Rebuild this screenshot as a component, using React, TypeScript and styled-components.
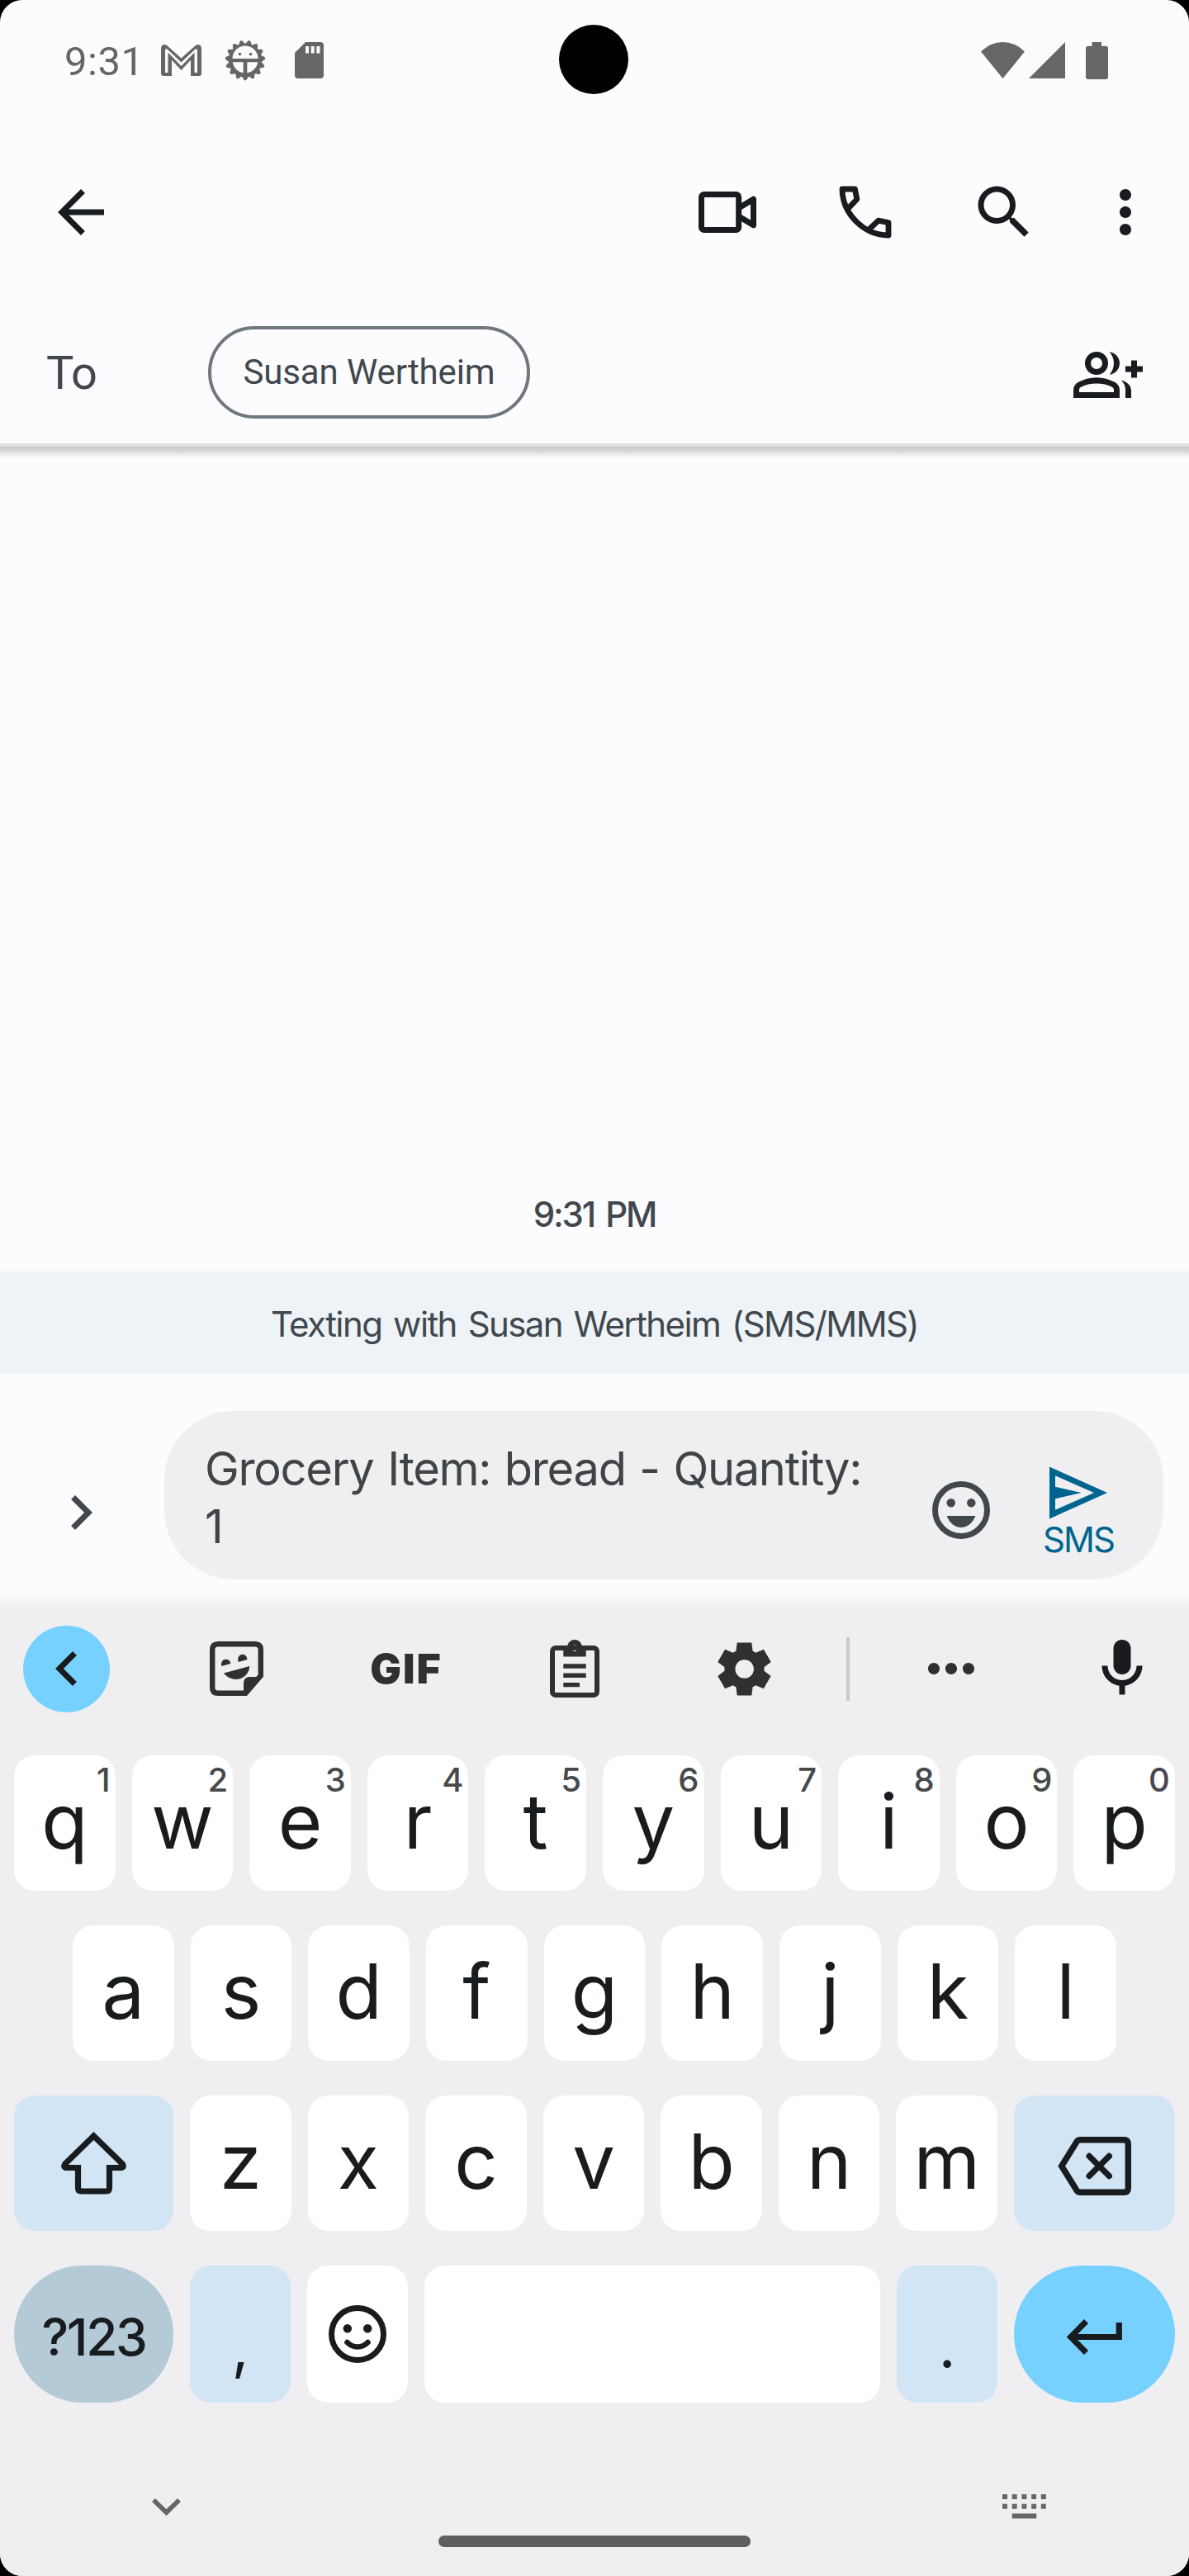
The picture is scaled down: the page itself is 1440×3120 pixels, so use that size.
import React from "react";
import styled, { createGlobalStyle } from "styled-components";

const ink = "#191c1e";
const slate = "#41484d";
const statusGray = "#666666";
const board = "#efeff2";
const accent = "#76d1ff";
const tint = "#d2e5f4";

const GlobalStyle = createGlobalStyle`
  * { box-sizing: border-box; }
  body { margin: 0; background: #000; }
`;

const Screen = styled.main`
  position: relative;
  display: flex;
  flex-direction: column;
  width: 1440px;
  height: 3120px;
  overflow: hidden;
  border-radius: 27px;
  background: #fcfcff;
  font-family: Roboto, "Noto Sans", sans-serif;
  color: ${slate};
`;

const Icon = styled.svg<{ $w: number; $h?: number; $color?: string }>`
  display: block;
  flex: none;
  width: ${(p) => p.$w}px;
  height: ${(p) => p.$h ?? p.$w}px;
  fill: ${(p) => p.$color ?? ink};
  overflow: visible;
`;

/* ---------- status bar ---------- */

const StatusBar = styled.header`
  display: flex;
  align-items: center;
  flex: none;
  height: 144px;
  padding: 2px 98px 0 78px;
`;

const Clock = styled.span`
  width: 117px;
  padding-top: 4px;
  font-size: 49px;
  line-height: 60px;
  letter-spacing: 0.5px;
  color: ${statusGray};
`;

const Notifications = styled.div`
  display: flex;
  align-items: center;
  gap: 28px;
`;

const CardSlot = styled.div`
  padding-left: 7px;
`;

const Indicators = styled.div`
  display: flex;
  align-items: flex-start;
  margin-left: auto;
  gap: 5px;
`;

const BatterySlot = styled.div`
  margin-left: 20px;
`;

const CameraHole = styled.div`
  position: absolute;
  left: 677px;
  top: 30px;
  width: 84px;
  height: 84px;
  border-radius: 50%;
  background: #000;
`;

/* ---------- app bar ---------- */

const AppBar = styled.nav`
  display: flex;
  align-items: center;
  flex: none;
  height: 226px;
  padding: 0 35px 0 56px;
`;

const Actions = styled.div`
  display: flex;
  align-items: center;
  gap: 83.5px;
  margin-left: auto;
`;

const MenuSlot = styled.div`
  margin-left: -20px;
`;

const Recipients = styled.section`
  display: flex;
  align-items: center;
  flex: none;
  height: 167px;
  padding: 0 56px;
`;

const ToLabel = styled.span`
  width: 196px;
  margin-bottom: 4px;
  font-size: 56px;
  line-height: 66px;
  letter-spacing: -0.7px;
`;

const Chip = styled.button`
  height: 112px;
  width: 390px;
  margin-bottom: 5px;
  padding: 0;
  border: 4px solid #6f787e;
  border-radius: 56px;
  background: none;
  font: 42px/50px Roboto, sans-serif;
  letter-spacing: -0.1px;
  color: ${slate};
`;

const PushRight = styled.div`
  margin-left: auto;
`;

const Rule = styled.div`
  flex: none;
  height: 18px;
  background: linear-gradient(#dfe0e1 0, #e4e5e6 4px, #c8c8ca 4px, #d6d6d8 9px, #efeff1 14px, #fcfcff 18px);
`;

/* ---------- conversation ---------- */

const Conversation = styled.section`
  display: flex;
  flex: 1;
  flex-direction: column;
  justify-content: flex-end;
  align-items: center;
  padding-bottom: 44px;
`;

const Timestamp = styled.time`
  font: 500 42px/50px Inter, sans-serif;
  letter-spacing: -2.1px;
  word-spacing: 4px;
`;

const Banner = styled.p`
  flex: none;
  margin: 0;
  height: 124px;
  background: #eef3f8;
  font: 42px/128px Inter, sans-serif;
  letter-spacing: -1.6px;
  word-spacing: 3.6px;
  text-align: center;
  white-space: nowrap;
`;

const Compose = styled.section`
  display: flex;
  flex: none;
  height: 280px;
  padding: 45px 31px 31px 56px;
  background: linear-gradient(#fcfcff 266px, #f1f1f4 280px);
`;

const ExpandButton = styled.div`
  width: 143px;
  padding-top: 81px;
`;

const Field = styled.div`
  display: flex;
  flex: 1;
  height: 204px;
  padding-left: 49px;
  border-radius: 84px;
  background: ${board};
`;

const Draft = styled.p`
  flex: none;
  width: 881px;
  margin: 0;
  padding-top: 35px;
  font: 56px/70px Inter, sans-serif;
  letter-spacing: -1.3px;
  word-spacing: 2.2px;
  color: #3f4447;
`;

const EmojiSlot = styled.div`
  padding-top: 78px;
  margin-left: -7px;
`;

const SendButton = styled.div`
  display: flex;
  flex-direction: column;
  align-items: center;
  width: 110px;
  margin-left: 45px;
  padding-top: 57px;
  font: 42px/50px Inter, sans-serif;
  letter-spacing: -1.9px;
  color: #00658e;
`;

const SendLabel = styled.span`
  margin-top: -10px;
`;

/* ---------- keyboard ---------- */

const Keyboard = styled.section`
  display: flex;
  flex-direction: column;
  flex: none;
  height: 1176px;
  background: ${board};
`;

const ToolStrip = styled.div`
  display: flex;
  align-items: center;
  height: 154px;
  padding: 0 39px 0 28px;
`;

const ToolCell = styled.div<{ $w: number }>`
  display: flex;
  justify-content: center;
  width: ${(p) => p.$w}px;
`;

const Collapse = styled.div`
  display: grid;
  place-items: center;
  width: 105px;
  height: 105px;
  border-radius: 50%;
  background: ${accent};
`;

const GifLabel = styled.span`
  padding-left: 2px;
  font: 900 50px/60px Inter, sans-serif;
  letter-spacing: 2px;
  color: #303030;
`;

const Separator = styled.div`
  width: 4px;
  height: 77px;
  background: #c9cacc;
`;

const Rows = styled.div`
  display: flex;
  flex-direction: column;
  gap: 42px;
  padding: 28px 17px 0;
`;

const Row = styled.div<{ $inset?: number; $h?: number }>`
  display: flex;
  gap: 20px;
  height: ${(p) => p.$h ?? 164}px;
  padding: 0 ${(p) => p.$inset ?? 0}px;
`;

const Key = styled.button<{ $w?: number; $bg?: string; $pill?: boolean; $drop?: number }>`
  position: relative;
  display: grid;
  justify-items: center;
  align-items: center;
  flex: ${(p) => (p.$w ? "none" : "1")};
  width: ${(p) => (p.$w ? `${p.$w}px` : "auto")};
  min-width: 0;
  height: 100%;
  padding: ${(p) => p.$drop ?? 0}px 0 0;
  border: 0;
  border-radius: ${(p) => (p.$pill ? 83 : 25)}px;
  background: ${(p) => p.$bg ?? "#fff"};
  color: ${ink};
`;

const Letter = styled.span`
  padding-bottom: 5px;
  font: 92px/158px Inter, sans-serif;
`;

const Hint = styled.span`
  position: absolute;
  top: 5px;
  right: 6px;
  font: 500 40px/50px Inter, sans-serif;
  color: #47494b;
`;

const SymbolsLabel = styled.span`
  padding-top: 8px;
  font: 500 62px/80px Inter, sans-serif;
  letter-spacing: -2.4px;
`;

const Punctuation = styled.span`
  padding-top: 29px;
  font: 72px/100px Inter, sans-serif;
`;

const NavBar = styled.footer`
  display: flex;
  justify-content: space-between;
  align-items: flex-start;
  margin-top: auto;
  height: 99px;
  padding: 0 173.5px 0 184px;
`;

const NavSlot = styled.div<{ $top: number }>`
  padding-top: ${(p) => p.$top}px;
`;

const Handle = styled.div`
  width: 378px;
  height: 14px;
  margin: 50px 0 0 8px;
  border-radius: 7px;
  background: #5f5f5f;
`;

/* ---------- glyph drawings ---------- */

const P24 = ({ d, size = 84, color }: { d: string; size?: number; color?: string }) => (
  <Icon viewBox="0 0 24 24" $w={size} $color={color}>
    <path d={d} fillRule="evenodd" />
  </Icon>
);

const MailIcon = () => (
  <Icon viewBox="0 0 49 38" $w={49} $h={38} $color={statusGray}>
    <path
      fillRule="evenodd"
      d="M0 5Q0 0 4.500 0Q6.200 0 8 1.800L24.500 16.500L41 1.800Q42.800 0 44.500 0Q49 0 49 5V35Q49 38 46 38H36V18.700L24.500 31L13 18.700V38H3Q0 38 0 35ZM5 6.500Q5.500 4.500 7.500 5.500L24.500 21.500L41.500 5.500Q43.500 4.500 44 6.500V34H40.500V9.500L24.500 26L8.500 9.500V34H5Z"
    />
  </Icon>
);

const BugIcon = () => (
  <Icon viewBox="-25 -25 50 50" $w={50} $color={statusGray}>
    {Array.from({ length: 15 }, (_, i) => (
      <path
        key={i}
        d="M-4.300 19L-1.500 23.700Q0 25.300 1.500 23.700L4.300 19Z"
        transform={`rotate(${i * 24})`}
      />
    ))}
    <circle r={20.2} />
    <path
      fill="#fcfcff"
      d="M-15.500 -2A15.500 15.500 0 0 1 15.500 -2ZM-15.300 2.300H-2.300V15.300A15.500 15.500 0 0 1 -15.300 2.300ZM15.300 2.300H2.300V15.300A15.500 15.500 0 0 0 15.300 2.300Z"
    />
    <circle cx={-6.5} cy={-7.4} r={1.8} />
    <circle cx={6.5} cy={-7.4} r={1.8} />
  </Icon>
);

const CardIcon = () => (
  <Icon viewBox="0 0 35 44" $w={35} $h={44} $color={statusGray}>
    <path
      fillRule="evenodd"
      d="M13 0H31Q35 0 35 4V40Q35 44 31 44H4Q0 44 0 40V13ZM13 5V13.500H17V5ZM19.700 5V13.500H23.700V5ZM26.300 5V13.500H30.500V5Z"
    />
  </Icon>
);

const WifiIcon = () => (
  <Icon viewBox="0 0 53 44" $w={53} $h={44} $color={statusGray}>
    <path d="M0 11.500Q11.500 0 26.500 0T53 11.500L26.500 44Z" />
  </Icon>
);

const SignalIcon = () => (
  <Icon viewBox="0 0 44 44" $w={44} $color={statusGray}>
    <path d="M44 0V44H0Z" />
  </Icon>
);

const BatteryIcon = () => (
  <Icon viewBox="0 0 27 45" $w={27} $h={45} $color={statusGray}>
    <path d="M7.500 0H19V4.700H24Q27 4.700 27 7.700V42Q27 45 24 45H3Q0 45 0 42V7.700Q0 4.700 3 4.700H7.500Z" />
  </Icon>
);

const VideoIcon = () => (
  <Icon viewBox="0 0 24 24" $w={84}>
    <g fill="none" stroke={ink} strokeWidth={2} strokeLinejoin="round">
      <rect x={3} y={5.85} width={12.9} height={12.3} rx={0.9} />
      <path d="M16 10.500L21 7.500V16.500L16 13.500" />
    </g>
  </Icon>
);

const PhoneIcon = () => (
  <Icon viewBox="0 0 24 24" $w={84}>
    <path
      fill="none"
      stroke={ink}
      strokeWidth={1.95}
      strokeLinejoin="round"
      d="M6.100 10.700L9.100 7.500L8.400 4H4C4 12.500 11.500 20 20 20V15.600L16.500 14.900L13.300 17.900"
    />
  </Icon>
);

const PeopleAddIcon = () => (
  <P24 d="M8 4a4 4 0 1 0 0 8a4 4 0 0 0 0-8zm0 2a2 2 0 1 1 0 4a2 2 0 0 1 0-4zM0 20V17.200c0-1.100.6-2 1.600-2.600C3.500 13.500 5.600 12.900 8 12.900s4.500.6 6.400 1.700c1 .6 1.600 1.500 1.600 2.600V20H0zm2-2h12v-.8c0-.4-.2-.7-.5-.9C11.900 15.400 10 15 8 15s-3.900.4-5.500 1.300c-.3.200-.5.500-.5.900V18zM12.500 11.950C13.400 10.900 14 9.500 14 8s-.6-2.900-1.500-3.950C14.500 4.300 16 6 16 8s-1.500 3.700-3.500 3.950zM16.530 13.830C18.600 14.400 20 15.600 20 17.500V20h-2v-3c0-1.200-.6-2.300-1.470-3.170zM20 7h2v2h2v2h-2v2h-2v-2h-2v-2h2z" />
);

const GrinIcon = () => (
  <Icon viewBox="0 0 24 24" $w={84} $color={slate}>
    <circle cx={12} cy={12} r={9} fill="none" stroke={slate} strokeWidth={2} />
    <circle cx={8.5} cy={9.5} r={1.5} />
    <circle cx={15.5} cy={9.5} r={1.5} />
    <path d="M7.050 14H16.950C16.100 16.400 14.200 18 12 18S7.900 16.400 7.050 14Z" />
  </Icon>
);

const StickerIcon = () => (
  <Icon viewBox="0 0 65 66" $w={65} $h={66} $color="#303030">
    <path
      fill="none"
      stroke="#303030"
      strokeWidth={6.4}
      d="M10 3.200H55Q61.800 3.200 61.800 10V41.500L43.500 62.800H10Q3.200 62.800 3.200 56V10Q3.200 3.200 10 3.200Z"
    />
    <path d="M41 61V51Q41 43 49 43H62L44 64Z" />
    <path d="M14.300 30C13 25 16 21.700 19.500 21.700S25 24 25.300 27Z" />
    <path d="M34.700 25C33 19.500 36 15.700 39.500 15.700S45 18 45.500 22Z" />
    <path d="M17 38.500L48.300 30C48 38.500 41 45.500 33 46C26 46 20 43 17 38.500Z" />
  </Icon>
);

const ClipboardIcon = () => (
  <Icon viewBox="0 0 60 70" $w={60} $h={70} $color="#303030">
    <rect x={3} y={10} width={54} height={57} rx={4} fill="none" stroke="#303030" strokeWidth={6} />
    <path
      fillRule="evenodd"
      d="M16.300 20.500V8H21C22 3 25.500 0 30 0S38 3 39 8H43.700V20.500ZM30 6.500a3.700 3.700 0 1 0 0 7.400a3.700 3.700 0 0 0 0-7.400z"
    />
    <path d="M16.300 29.300H43.700V34.800H16.300ZM16.300 40.500H43.700V46H16.300ZM16.300 52H36V57.300H16.300Z" />
  </Icon>
);

const ShiftIcon = () => (
  <Icon viewBox="0 0 79 76" $w={79} $h={76}>
    <path
      fill="none"
      stroke={ink}
      strokeWidth={7.2}
      d="M39.500 5L74.300 39Q77 43.500 72 43.500H58.500V68Q58.500 72 54.500 72H24.500Q20.500 72 20.500 68V43.500H7Q2 43.500 4.700 39Z"
    />
  </Icon>
);

const BackspaceIcon = () => (
  <Icon viewBox="0 0 89 71" $w={89} $h={71}>
    <g fill="none" stroke={ink} strokeWidth={7.4}>
      <path d="M27 3.700H80Q85.300 3.700 85.300 9V62Q85.300 67.300 80 67.300H27Q24.500 67.300 23 65L4.700 35.500L23 6Q24.500 3.700 27 3.700Z" />
      <path strokeLinecap="round" d="M38.200 23.500L62.300 47.500M62.300 23.500L38.200 47.500" />
    </g>
  </Icon>
);

const SmileIcon = () => (
  <Icon viewBox="-35 -35 70 70" $w={70}>
    <circle r={31.5} fill="none" stroke={ink} strokeWidth={7} />
    <circle cx={-12.2} cy={-6.8} r={5.2} />
    <circle cx={12.2} cy={-6.8} r={5.2} />
    <path fill="none" stroke={ink} strokeWidth={6.6} strokeLinecap="round" d="M-12.500 10Q-7 15.500 0 15.500T12.500 10" />
  </Icon>
);

const EnterIcon = () => (
  <Icon viewBox="0 0 67 43" $w={67} $h={43}>
    <path fill="none" stroke={ink} strokeWidth={7.2} d="M63.300 4V21.500H6M23.500 2.500L4.800 21.500L23.500 40.500" />
  </Icon>
);

const HideIcon = () => (
  <Icon viewBox="0 0 35 21" $w={35} $h={21}>
    <path fill="none" stroke="#666" strokeWidth={5.6} d="M2 2L17.500 17L33 2" />
  </Icon>
);

const KeyboardIcon = () => (
  <Icon viewBox="0 0 53 30" $w={53} $h={30} $color="#666">
    {[0, 1, 2, 3, 4].map((c) =>
      [0, 11.7].map((y) => <rect key={`${c}-${y}`} x={c * 11.7} y={y} width={6} height={6} />)
    )}
    <rect x={11.7} y={23.4} width={29.5} height={6} />
  </Icon>
);

const LetterKey = ({ letter, hint }: { letter: string; hint?: string }) => (
  <Key>
    <Letter>{letter}</Letter>
    {hint && <Hint>{hint}</Hint>}
  </Key>
);

const topRow = [..."qwertyuiop"];
const homeRow = [..."asdfghjkl"];
const lowRow = [..."zxcvbnm"];

export default function App() {
  return (
    <>
      <GlobalStyle />
      <Screen>
        <StatusBar>
          <Clock>9:31</Clock>
          <Notifications>
            <MailIcon />
            <BugIcon />
            <CardSlot>
              <CardIcon />
            </CardSlot>
          </Notifications>
          <Indicators>
            <WifiIcon />
            <SignalIcon />
            <BatterySlot>
              <BatteryIcon />
            </BatterySlot>
          </Indicators>
        </StatusBar>
        <CameraHole />

        <AppBar>
          <P24 d="M20 11H7.830l5.590-5.590L12 4l-8 8 8 8 1.410-1.410L7.830 13H20v-2z" />
          <Actions>
            <VideoIcon />
            <PhoneIcon />
            <P24 d="M15.500 14h-.79l-.28-.27A6.471 6.471 0 0 0 16 9.500 6.500 6.500 0 1 0 9.500 16c1.610 0 3.090-.59 4.230-1.570l.27.28v.79l5 4.990L20.490 19l-4.990-5zm-6 0C7.010 14 5 11.990 5 9.500S7.010 5 9.500 5 14 7.010 14 9.500 11.990 14 9.500 14z" />
            <MenuSlot>
              <P24 d="M12 8c1.100 0 2-.9 2-2s-.9-2-2-2-2 .9-2 2 .9 2 2 2zm0 2c-1.100 0-2 .9-2 2s.9 2 2 2 2-.9 2-2-.9-2-2-2zm0 6c-1.100 0-2 .9-2 2s.9 2 2 2 2-.9 2-2-.9-2-2-2z" />
            </MenuSlot>
          </Actions>
        </AppBar>

        <Recipients>
          <ToLabel>To</ToLabel>
          <Chip>Susan Wertheim</Chip>
          <PushRight>
            <PeopleAddIcon />
          </PushRight>
        </Recipients>
        <Rule />

        <Conversation>
          <Timestamp>9:31 PM</Timestamp>
        </Conversation>
        <Banner>Texting with Susan Wertheim (SMS/MMS)</Banner>

        <Compose>
          <ExpandButton>
            <P24 color={slate} d="M8.590 16.590L13.170 12 8.590 7.410 10 6l6 6-6 6z" />
          </ExpandButton>
          <Field>
            <Draft>
              Grocery Item: bread - Quantity:
              <br />1
            </Draft>
            <EmojiSlot>
              <GrinIcon />
            </EmojiSlot>
            <SendButton>
              <P24 color="#00658e" d="M2 3L22 12L2 21ZM4 6.100V9.900L13 12L4 14.100V17.900L17.400 12Z" />
              <SendLabel>SMS</SendLabel>
            </SendButton>
          </Field>
        </Compose>

        <Keyboard>
          <ToolStrip>
            <Collapse>
              <P24 d="M15.410 7.410L14 6l-6 6 6 6 1.410-1.410L10.830 12z" />
            </Collapse>
            <ToolCell $w={307}>
              <StickerIcon />
            </ToolCell>
            <ToolCell $w={102}>
              <GifLabel>GIF</GifLabel>
            </ToolCell>
            <ToolCell $w={307}>
              <ClipboardIcon />
            </ToolCell>
            <ToolCell $w={104}>
              <P24
                size={77}
                color="#303030"
                d="M9.250 22l-.4-3.200q-.325-.125-.612-.3t-.563-.375L4.700 19.375l-2.750-4.750l2.575-1.950Q4.500 12.500 4.500 12.338v-.675q0-.163.025-.338L1.950 9.375l2.750-4.750l2.975 1.250q.275-.2.575-.375t.6-.3l.4-3.200h5.500l.4 3.200q.325.125.613.3t.562.375l2.975-1.250l2.750 4.750l-2.575 1.950q.025.175.025.338v.674q0 .163-.05.338l2.575 1.950l-2.750 4.750l-2.950-1.250q-.275.2-.575.375t-.6.3l-.4 3.200zm2.800-6.500q1.450 0 2.475-1.025T15.550 12t-1.025-2.475T12.050 8.500q-1.475 0-2.488 1.025T8.550 12t1.013 2.475T12.050 15.500"
              />
            </ToolCell>
            <ToolCell $w={148}>
              <Separator />
            </ToolCell>
            <ToolCell $w={102}>
              <P24
                color="#303030"
                d="M6 10c-1.100 0-2 .9-2 2s.9 2 2 2 2-.9 2-2-.9-2-2-2zm12 0c-1.100 0-2 .9-2 2s.9 2 2 2 2-.9 2-2-.9-2-2-2zm-6 0c-1.100 0-2 .9-2 2s.9 2 2 2 2-.9 2-2-.9-2-2-2z"
              />
            </ToolCell>
            <PushRight>
              <P24 d="M12 14c1.660 0 3-1.340 3-3V5c0-1.660-1.340-3-3-3S9 3.340 9 5v6c0 1.660 1.340 3 3 3zm5-3c0 2.760-2.240 5-5 5s-5-2.240-5-5H5c0 3.530 2.610 6.430 6 6.920V21h2v-3.080c3.390-.49 6-3.390 6-6.920h-2z" />
            </PushRight>
          </ToolStrip>

          <Rows>
            <Row>
              {topRow.map((l, i) => (
                <LetterKey key={l} letter={l} hint={String((i + 1) % 10)} />
              ))}
            </Row>
            <Row $inset={71}>
              {homeRow.map((l) => (
                <LetterKey key={l} letter={l} />
              ))}
            </Row>
            <Row>
              <Key $w={193} $bg={tint}>
                <ShiftIcon />
              </Key>
              {lowRow.map((l) => (
                <LetterKey key={l} letter={l} />
              ))}
              <Key $w={195} $bg={tint} $drop={6}>
                <BackspaceIcon />
              </Key>
            </Row>
            <Row $h={166}>
              <Key $w={193} $bg="#b4cad7" $pill>
                <SymbolsLabel>?123</SymbolsLabel>
              </Key>
              <Key $w={122} $bg={tint}>
                <Punctuation>,</Punctuation>
              </Key>
              <Key $w={122}>
                <SmileIcon />
              </Key>
              <Key />
              <Key $w={122} $bg={tint}>
                <Punctuation>.</Punctuation>
              </Key>
              <Key $w={195} $bg={accent} $pill $drop={6}>
                <EnterIcon />
              </Key>
            </Row>
          </Rows>

          <NavBar>
            <NavSlot $top={5}>
              <HideIcon />
            </NavSlot>
            <Handle />
            <NavSlot $top={0}>
              <KeyboardIcon />
            </NavSlot>
          </NavBar>
        </Keyboard>
      </Screen>
    </>
  );
}
